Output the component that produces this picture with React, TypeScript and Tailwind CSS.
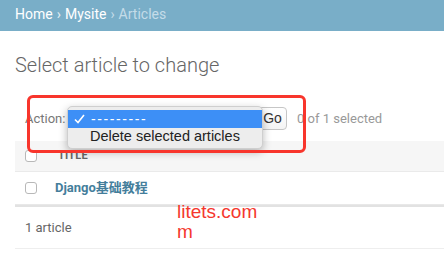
import React from "react";

export default function App() {
  const roboto = { fontFamily: "Roboto, 'Noto Sans CJK SC', sans-serif" };
  const sys = { fontFamily: "'Liberation Sans', Arial, sans-serif" };
  return (
    <div className="relative w-[444px] h-[260px] overflow-hidden bg-white" style={roboto}>
      {/* breadcrumbs */}
      <div className="h-[31px] bg-[#79aec8] px-[15px] pb-[2px] flex items-center text-[14px] text-white whitespace-nowrap">
        <span>Home</span>
        <span className="mx-[4px] text-[#e6f0f5]">›</span>
        <span>Mysite</span>
        <span className="mx-[4px] text-[#c4dce8]">›</span>
        <span className="text-[#c4dce8]">Articles</span>
      </div>

      <div className="pl-[15px] w-[600px]">
        <h1 className="mt-[22px] text-[20px] leading-[24px] font-light text-[#666]">
          Select article to change
        </h1>

        {/* actions */}
        <div className="mt-[19px] h-[45px] flex items-center pl-[10px] text-[13px] whitespace-nowrap">
          <span className="text-[#777] w-[42px]">Action:</span>
          <div className="relative w-[191px] h-[22px]">
            <div
              className="absolute left-0 top-[-2px] w-[196px] h-[43px] rounded-[5px] bg-[#ededed] border border-[#cfcfcf] shadow-[0_3px_8px_rgba(0,0,0,0.28)] py-[3px] z-10"
              style={sys}
            >
              <div className="h-[18px] bg-[#3d8ff6] flex items-center text-white text-[14px]">
                <svg width="11" height="10" viewBox="0 0 11 10" className="ml-[6px]">
                  <polyline points="1,5.5 4,8.5 10,1" fill="none" stroke="white" strokeWidth="1.6" />
                </svg>
                <span className="ml-[6px] tracking-[1.6px] leading-none">---------</span>
              </div>
              <div className="h-[19px] flex items-center text-[#222] text-[14.5px] pl-[22px]">
                Delete selected articles
              </div>
            </div>
          </div>
          <button
            className="ml-[0px] w-[29px] h-[23px] rounded-[4px] border border-[#c6c6c6] bg-gradient-to-b from-white to-[#f4f4f4] text-[14px] text-[#333] flex items-center justify-center"
            style={sys}
          >
            Go
          </button>
          <span className="ml-[10px] text-[#999]">0 of 1 selected</span>
        </div>

        {/* table */}
        <div className="w-[560px]">
          <div className="h-[31px] bg-[#f6f6f6] border-b border-[#eaeaea] flex items-center pl-[10px]">
            <span className="w-[12px] h-[12px] rounded-[3px] border border-[#b8b8b8] bg-white" />
            <span className="ml-[21px] text-[11px] font-bold uppercase text-[#666] tracking-[0.2px]">Title</span>
          </div>
          <div className="h-[33px] border-b border-[#e8e8e8] flex items-center pl-[10px]">
            <span className="w-[12px] h-[12px] rounded-[3px] border border-[#b8b8b8] bg-white" />
            <span className="ml-[18px] text-[13px] font-bold text-[#447e9b]">Django基础教程</span>
          </div>
          <div className="h-[44px] border-t-[2px] border-b border-t-[#e2e2e2] border-b-[#eee] flex items-center pl-[10px] text-[13px] text-[#666]">
            1 article
          </div>
        </div>
      </div>

      {/* watermark */}
      <div
        className="absolute left-[177px] top-[202px] text-[19px] leading-[20px] text-[#f5382e]"
        style={sys}
      >
        litets.com
        <br />m
      </div>

      {/* annotation box */}
      <div className="absolute left-[27px] top-[95px] w-[279px] h-[58px] rounded-[6px] border-[3px] border-[#f8352c] z-20 pointer-events-none" />
    </div>
  );
}
